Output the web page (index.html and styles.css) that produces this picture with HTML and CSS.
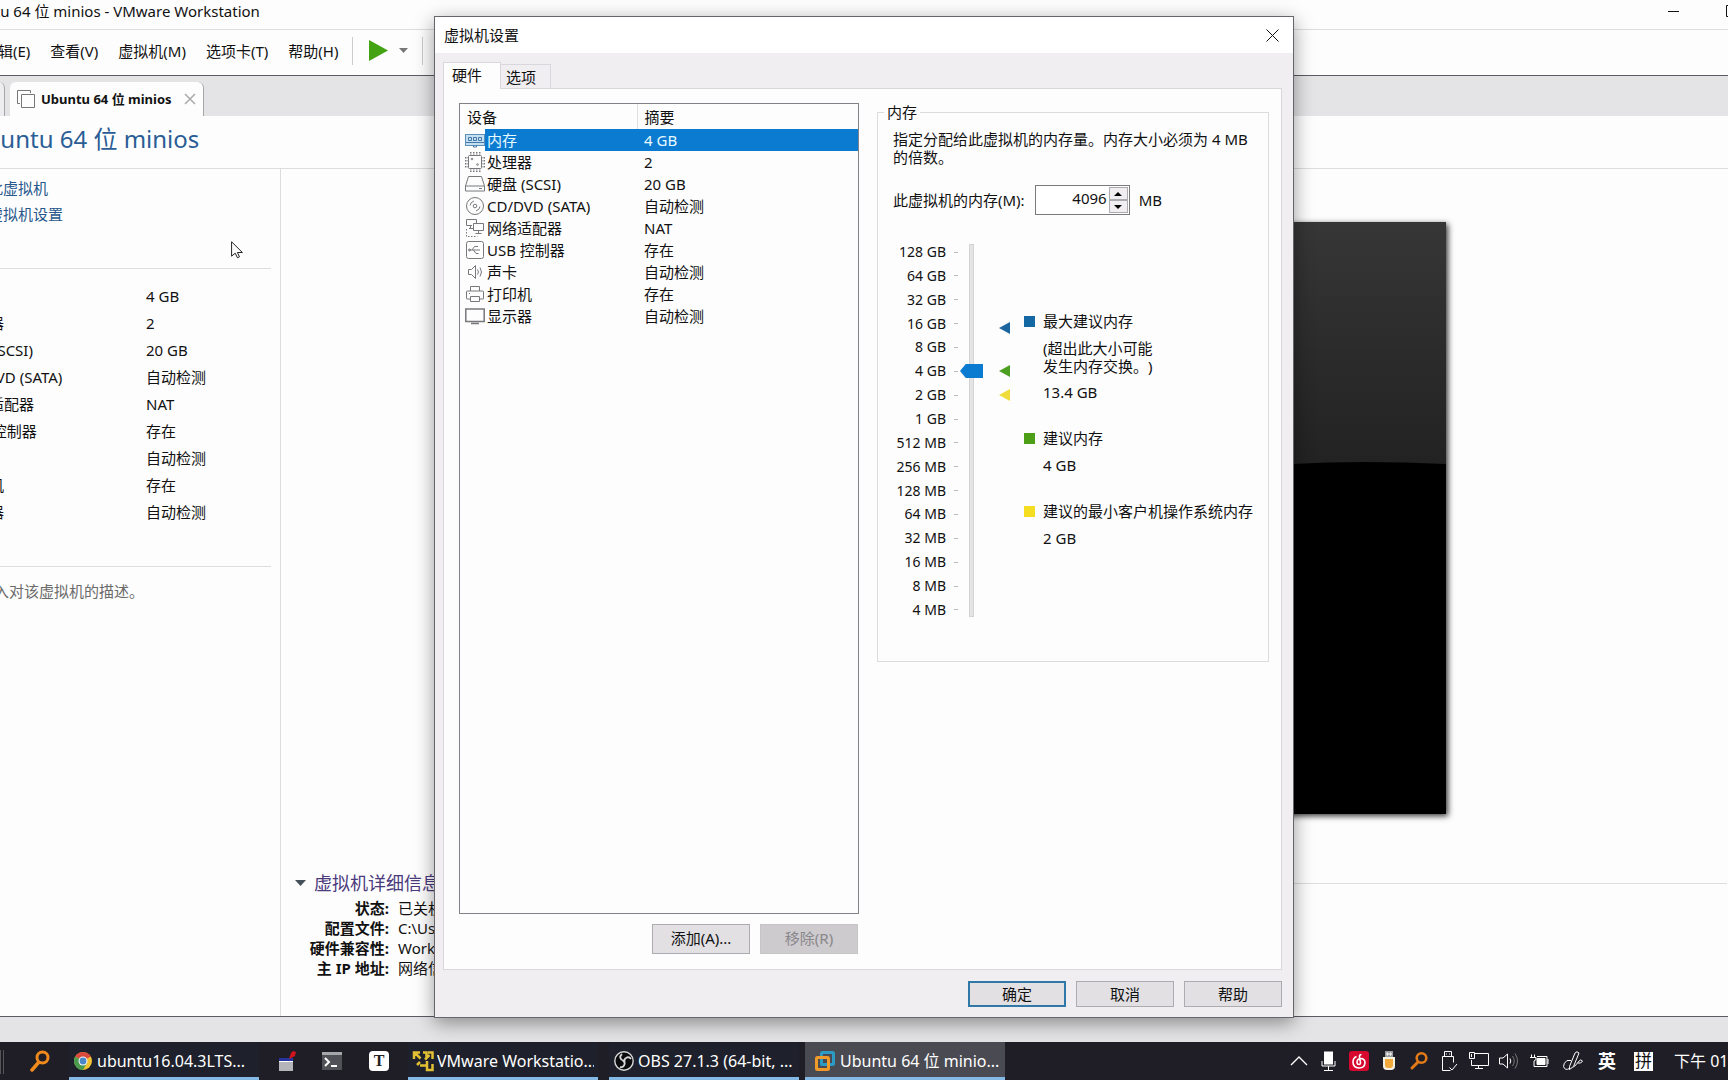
FILE: index.html
```html
<!DOCTYPE html>
<html lang="zh-CN">
<head>
<meta charset="utf-8">
<title>Ubuntu 64 位 minios - VMware Workstation</title>
<link rel="stylesheet" href="styles.css">
</head>
<body>
<div class="desktop">
  <main class="app">
    <header class="titlebar">
      <span class="titlebar-text">Ubuntu 64 位 minios - VMware Workstation</span>
      <button class="caption-btn" type="button" aria-label="最小化"><svg width="12" height="12" viewBox="0 0 12 12"><path d="M0 6.500h11" stroke="#111" fill="none"/></svg></button>
      <button class="caption-btn maximize" type="button" aria-label="最大化"><svg width="12" height="12" viewBox="0 0 12 12"><path d="M.5.500h11v11h-11z" stroke="#111" fill="none"/></svg></button>
    </header>
    <nav class="menubar">
      <div class="menu-items">
        <button type="button">编辑(E)</button>
        <button type="button">查看(V)</button>
        <button type="button">虚拟机(M)</button>
        <button type="button">选项卡(T)</button>
        <button type="button">帮助(H)</button>
      </div>
      <div class="power-group">
        <button type="button" aria-label="开启此虚拟机"><svg width="19" height="21" viewBox="0 0 19 21"><path d="M0 0 19 10.500 0 21z" fill="#43a312"/></svg></button>
        <button type="button" aria-label="电源选项"><svg width="9" height="5" viewBox="0 0 9 5"><path d="M0 0h9L4.500 5z" fill="#777"/></svg></button>
      </div>
    </nav>
    <div class="tabstrip">
      <div class="vm-tab vm-tab-rest"></div>
      <div class="vm-tab vm-tab-active">
        <svg width="18" height="18" viewBox="0 0 18 18" fill="none" stroke="#777"><path d="M3 13.500H.5V.500h13V3"/><path d="M4.500 4.500h13v13h-13z"/></svg>
        <span>Ubuntu 64 位 minios</span>
        <button type="button" aria-label="关闭选项卡"><svg width="12" height="12" viewBox="0 0 12 12"><path d="M1 1l10 10M11 1 1 11" stroke="#aaa" stroke-width="1.500"/></svg></button>
      </div>
    </div>
    <h1 class="vm-name">Ubuntu 64 位 minios</h1>
    <div class="workspace">
      <aside class="sidebar">
        <ul class="actions">
          <li><a href="#power">开启此虚拟机</a></li>
          <li><a href="#settings">编辑虚拟机设置</a></li>
        </ul>
        <dl class="devices">
          <dt>内存</dt><dd>4 GB</dd>
          <dt>处理器</dt><dd>2</dd>
          <dt>硬盘 (SCSI)</dt><dd>20 GB</dd>
          <dt>CD/DVD (SATA)</dt><dd>自动检测</dd>
          <dt>网络适配器</dt><dd>NAT</dd>
          <dt>USB 控制器</dt><dd>存在</dd>
          <dt>声卡</dt><dd>自动检测</dd>
          <dt>打印机</dt><dd>存在</dd>
          <dt>显示器</dt><dd>自动检测</dd>
        </dl>
        <p class="description">在此处键入对该虚拟机的描述。</p>
      </aside>
      <section class="content">
        <div class="console"><svg viewBox="0 0 884 592" preserveAspectRatio="none">
          <defs><linearGradient id="gloss" x1="0" y1="0" x2="0" y2="1"><stop offset="0" stop-color="#363636"/><stop offset="1" stop-color="#1c1b1c"/></linearGradient></defs>
          <path d="M0 0h884v592H0z" fill="#000"/><path d="M0 0h884v242Q800 238 730 242 600 249 442 280L0 330z" fill="url(#gloss)"/></svg></div>
        <div class="details">
          <div class="details-head">
            <svg width="11" height="6" viewBox="0 0 11 6"><path d="M0 0h11L5.500 6z" fill="#44505a"/></svg>
            <h2>虚拟机详细信息</h2><span class="rule"></span>
          </div>
          <dl>
            <dt>状态:</dt><dd>已关机</dd>
            <dt>配置文件:</dt><dd>C:\Users</dd>
            <dt>硬件兼容性:</dt><dd>Workstation</dd>
            <dt>主 IP 地址:</dt><dd>网络信息</dd>
          </dl>
        </div>
      </section>
    </div>
    <footer class="statusbar"></footer>
  </main>

  <svg class="cursor" width="12" height="18" viewBox="0 0 12 18"><path d="M.6.800v14.400l3.600-3 2.300 4.600 2-1-2.100-4.300h5z" fill="#fff" stroke="#222"/></svg>

  <section class="dialog" role="dialog" aria-labelledby="dialog-title">
    <header class="dialog-title">
      <h2 id="dialog-title">虚拟机设置</h2>
      <button type="button" aria-label="关闭"><svg width="13" height="13" viewBox="0 0 13 13"><path d="M.5.500l12 12M12.500.500l-12 12" stroke="#111"/></svg></button>
    </header>
    <div class="dialog-tabs" role="tablist">
      <button type="button" role="tab" aria-selected="true" class="active">硬件</button>
      <button type="button" role="tab" aria-selected="false">选项</button>
    </div>
    <div class="pane">
      <div class="hardware">
        <div class="device-list">
          <table>
            <thead><tr><th class="c-name">设备</th><th>摘要</th></tr></thead>
            <tbody>
              <tr class="selected"><td><div class="dev"><svg class="icon" viewBox="0 0 20 20"><rect x=".5" y="4.500" width="19" height="11" fill="#c4dff0" stroke="#5d8fb8"/><path d="M3.500 7.500h3v3h-3zM8.500 7.500h3v3h-3zM13.500 7.500h3v3h-3zM1 12.500h18M8.500 15.500V17h3v-1.500" fill="none" stroke="#4379a8"/></svg><span>内存</span></div></td><td>4 GB</td></tr>
              <tr><td><div class="dev"><svg class="icon" viewBox="0 0 20 20"><rect x="3.500" y="3.500" width="13" height="13" rx="1"/><path d="M5 .500h11M5 19.500h11M5 2h11M5 18h11M.5 5v11M19.500 5v11M2 5v11M18 5v11" stroke-dasharray="1.500 1.500"/><circle cx="7" cy="7" r=".8"/><circle cx="12.500" cy="12.500" r=".8"/></svg><span>处理器</span></div></td><td>2</td></tr>
              <tr><td><div class="dev"><svg class="icon" viewBox="0 0 20 20"><path d="M3.500 2.500h13l3 9.500v5H.5v-5zM.5 12h19M14 14.500h3"/></svg><span>硬盘 (SCSI)</span></div></td><td>20 GB</td></tr>
              <tr><td><div class="dev"><svg class="icon" viewBox="0 0 20 20"><circle cx="10" cy="10" r="8.500"/><circle cx="10" cy="10" r="1.800"/><path d="M5 9.500q.5-3.500 4-4.500M15 10.500q-.5 3.500-4 4.500"/></svg><span>CD/DVD (SATA)</span></div></td><td>自动检测</td></tr>
              <tr><td><div class="dev"><svg class="icon" viewBox="0 0 20 20"><path d="M7 7.500H1.500v-6h10V5M8.500 5.500h10v7h-10zM13.500 12.500v3M10.500 15.500h6M4 10.500h4M5.500 7.500v3"/><path d="M1.500 11v7.500h11" stroke-dasharray="1.500 1.500"/></svg><span>网络适配器</span></div></td><td>NAT</td></tr>
              <tr><td><div class="dev"><svg class="icon" viewBox="0 0 20 20"><rect x="1.500" y="1.500" width="17" height="17" rx="2"/><path d="M4 10h11M7 10l2.500-3.500H13M8.500 10l2.500 3.500h2.500"/><circle cx="4.500" cy="10" r="1"/></svg><span>USB 控制器</span></div></td><td>存在</td></tr>
              <tr><td><div class="dev"><svg class="icon" viewBox="0 0 20 20"><path d="M3.500 7.500h3l4-4v13l-4-4h-3zM12.500 7.500q2 2.500 0 5M15 5.500q3 4.500 0 9"/></svg><span>声卡</span></div></td><td>自动检测</td></tr>
              <tr><td><div class="dev"><svg class="icon" viewBox="0 0 20 20"><path d="M5.500 7V2.500h9V7M5.500 15H2q-.5 0-.5-.5V8q0-1 1-1h15q1 0 1 1v6.500q0 .5-.5.5h-3.500M5.500 12.500h9v5h-9zM4 9.500h1"/></svg><span>打印机</span></div></td><td>存在</td></tr>
              <tr><td><div class="dev"><svg class="icon" viewBox="0 0 20 20"><path d="M.8 3h18.400v12.500H.8zM6 17.500h8" stroke-width="1.500"/></svg><span>显示器</span></div></td><td>自动检测</td></tr>
            </tbody>
          </table>
        </div>
        <div class="list-buttons">
          <button class="btn" type="button">添加(A)...</button>
          <button class="btn" type="button" disabled>移除(R)</button>
        </div>
      </div>
      <fieldset class="memory">
        <legend>内存</legend>
        <p>指定分配给此虚拟机的内存量。内存大小必须为 4 MB 的倍数。</p>
        <div class="amount">
          <label for="mem">此虚拟机的内存(M):</label>
          <span class="spin">
            <input id="mem" type="text" value="4096">
            <span class="spin-buttons">
              <button type="button" aria-label="增加"><svg width="8" height="4" viewBox="0 0 8 4"><path d="M0 4h8L4 0z"/></svg></button>
              <button type="button" aria-label="减少"><svg width="8" height="4" viewBox="0 0 8 4"><path d="M0 0h8L4 4z"/></svg></button>
            </span>
          </span>
          <span>MB</span>
        </div>
        <div class="scale">
          <ul class="ticks">
            <li>128 GB</li><li>64 GB</li><li>32 GB</li><li>16 GB</li><li>8 GB</li><li>4 GB</li><li>2 GB</li><li>1 GB</li>
            <li>512 MB</li><li>256 MB</li><li>128 MB</li><li>64 MB</li><li>32 MB</li><li>16 MB</li><li>8 MB</li><li>4 MB</li>
          </ul>
          <input class="slider" type="range" min="0" max="15" value="10" aria-label="内存">
          <div class="markers">
            <svg class="blue" viewBox="0 0 11 12"><path d="M0 6 11 0v12z"/></svg>
            <svg class="green" viewBox="0 0 11 12"><path d="M0 6 11 0v12z"/></svg>
            <svg class="yellow" viewBox="0 0 11 12"><path d="M0 6 11 0v12z"/></svg>
          </div>
          <dl class="legend">
            <dt class="max">最大建议内存</dt>
            <dd class="note">(超出此大小可能<br>发生内存交换。)</dd>
            <dd>13.4 GB</dd>
            <dt class="rec">建议内存</dt>
            <dd>4 GB</dd>
            <dt class="min">建议的最小客户机操作系统内存</dt>
            <dd>2 GB</dd>
          </dl>
        </div>
      </fieldset>
    </div>
    <footer class="dialog-buttons">
      <button class="btn default" type="button">确定</button>
      <button class="btn" type="button">取消</button>
      <button class="btn" type="button">帮助</button>
    </footer>
  </section>

  <nav class="taskbar">
    <span class="edge"></span>
    <button class="pin find" type="button" aria-label="搜索"><svg width="20" height="22" viewBox="0 0 20 22" fill="none" stroke="#f08a1c"><circle cx="12.500" cy="7.500" r="5.500" stroke-width="3"/><path d="M8.500 12.500 2 20" stroke-width="3.500" stroke-linecap="round"/></svg></button>
    <button class="task" type="button"><svg width="18" height="20" viewBox="0 0 18 20"><circle cx="9" cy="10" r="9" fill="#f2c230"/><path d="M9 10 1.200 5.500A9 9 0 0 1 16.800 5.500z" fill="#d94a3c"/><path d="M9 10 1.200 5.500A9 9 0 0 0 9 19l4-7z" fill="#4b9b4f"/><circle cx="9" cy="10" r="4.500" fill="#f4f6f8"/><circle cx="9" cy="10" r="3.400" fill="#4b86c9"/></svg><span>ubuntu16.04.3LTS...</span></button>
    <button class="pin files" type="button" aria-label="文件"><svg width="18" height="22" viewBox="0 0 18 22"><path d="M1 8h14v13H1z" fill="#b4b5b8"/><path d="M1 8h14v3H1z" fill="#24349c"/><path d="M1 11h14v1H1z" fill="#fff"/><path d="M11 9l2-6 2-2 3 1-1 4-4 2z" fill="#d0131c"/></svg></button>
    <button class="pin term" type="button" aria-label="终端"><svg width="20" height="18" viewBox="0 0 20 18"><path d="M0 0h20v18H0z" fill="#505157"/><path d="M0 0h20v3H0z" fill="#a5a6aa"/><path d="M3 6l4 4-4 4M9 14h6" fill="none" stroke="#fff" stroke-width="2"/></svg></button>
    <button class="pin typora" type="button">T</button>
    <button class="task vmware" type="button"><svg width="22" height="22" viewBox="0 0 22 22" fill="none" stroke="#e3c033" stroke-width="2.500"><path d="M2 9V2.500h6M2 2l6.500 6.500M11 2.500h3.500V7M16 2.500h4.500V9M17.500 5 13 9.500M8 12l-3 3M8 15.500h7V11M15 15v5h5.500v-6"/></svg><span>VMware Workstatio...</span></button>
    <button class="task obs" type="button"><svg width="20" height="20" viewBox="0 0 20 20" fill="none" stroke="#d8d8d8"><circle cx="10" cy="10" r="9.200" fill="#0b0b0d" stroke-width="1.400"/><path d="M10 10C6 9 5 5.500 8 3M10 10c1-4 5-5 7-2M10 10c2 3.500-1 7-4 6" stroke-width="1.800"/><circle cx="10" cy="10" r="1" fill="#ddd"/></svg><span>OBS 27.1.3 (64-bit, ...</span></button>
    <button class="task current" type="button"><svg width="20" height="20" viewBox="0 0 20 20" fill="none" stroke-width="3"><rect x="6.500" y="1.500" width="12" height="12" rx="1" stroke="#2b9bc4"/><rect x="1.500" y="6.500" width="12" height="12" rx="1" stroke="#f09a2a"/><path d="M6.500 8v5.500H12" stroke="#2b9bc4" stroke-width="2"/></svg><span>Ubuntu 64 位 minio...</span></button>
    <div class="tray">
      <svg viewBox="0 0 20 20"><path d="M2 14l8-8 8 8" stroke-width="1.300"/></svg>
      <svg viewBox="0 0 20 20"><rect x="5.500" y="1" width="8" height="12" fill="#fff"/><path d="M3 10v5h13v-5M9.500 15v4M5 19.500h9"/></svg>
      <svg viewBox="0 0 20 20"><rect width="20" height="20" rx="3" fill="#d8092f" stroke="none"/><path d="M12.500 3.500q-2.500 0-2 3l1 5q0 2-1.500 2-2 0-2-2.500 0-3 3.500-3.500 4.500 0 4.500 4.500-.5 5-6 5-6-.5-6-6Q4 7 7.500 5.500" stroke-width="1.600"/></svg>
      <svg viewBox="0 0 20 20"><path d="M6 0h8v6H6z" fill="#9b9b9d" stroke="none"/><path d="M8 2h1v2H8zM11 2h1v2h-1z"/><path d="M4 6h12v9q0 4-4 4H8q-4 0-4-4z" fill="#f3f0e4" stroke="none"/><path d="M6 8h8v6q0 3-3 3H9q-3 0-3-3z" fill="#f2a83a" stroke="none"/></svg>
      <svg viewBox="0 0 20 20"><g stroke="#e27a18"><circle cx="12.500" cy="7" r="4.800" stroke-width="2.600"/><path d="M9 11 3 17" stroke-width="3" stroke-linecap="round"/></g></svg>
      <svg viewBox="0 0 20 20"><path d="M5.500 5.500v-5h7v5M3.500 19.500v-14h11v6M3.500 19.500h8M10.500 16.500l2.500 2.500 5-6M7.500 2.500v1M10.500 2.500v1"/></svg>
      <svg viewBox="0 0 20 20"><path d="M6 2.500h13.500v12h-17V9M.5 1.500h5v6h-5zM2.500 3v3M9.500 14.500v3M6 17.500h8"/></svg>
      <svg viewBox="0 0 20 20"><path d="M.5 7v6H4l4.500 4V3L4 7zM11 7.500q1.500 2.500 0 5"/><path d="M13.500 5q3.500 5 0 10M16 2.500q5 7.500 0 15" stroke="#777"/></svg>
      <svg viewBox="0 0 20 20"><path d="M2.500 3.500v3M5.500 3.500v3M1 6.500h6v2L5 10v5.500h13v-10H8"/><path d="M8 7.500h8v6H8z" fill="#fff"/><path d="M19 8v5"/></svg>
      <svg class="pen" viewBox="0 0 20 20"><path d="M6.500 15.500 12 2q2-2.500 4 0l-5.500 13.500-4 3zM8 9.500H4Q.5 12 .5 15.500q1.500 4.500 6 2M10.500 16q3-2 5-5.500 2.500-3 4-.5-1.500 3-4.500 2"/></svg>
      <span class="lang">英</span>
      <span class="ime">拼</span>
      <span class="clock">下午 01:30</span>
    </div>
  </nav>
</div>
</body>
</html>
```
FILE: styles.css
```css
* { box-sizing: border-box; margin: 0; padding: 0; }
html, body { height: 100%; }
body {
  overflow: hidden;
  font: 15px/20px "Noto Sans", "Noto Sans CJK SC", sans-serif;
  text-spacing-trim: space-all;
  color: #111;
  background: #fdfdfd;
}
button, input { font: inherit; color: inherit; }
button { border: 0; background: none; }
ul { list-style: none; }
svg { display: block; flex: none; }

.desktop { position: relative; height: 100vh; min-height: 800px; display: flex; flex-direction: column; overflow: hidden; }

/* The main window hangs over the left and right screen edges */
.app { flex: 1; min-height: 0; margin: 0 -10px 0 -80px; display: flex; flex-direction: column; background: #fdfdfd; }

.titlebar { display: flex; align-items: center; height: 30px; padding: 0 0 8px 36px; border-bottom: 1px solid #ddd; }
.titlebar-text { flex: 1; white-space: nowrap; }
.caption-btn { width: 58px; height: 20px; }
.maximize { width: 12px; }

.menubar { display: flex; align-items: center; height: 46px; padding-bottom: 4px; border-bottom: 1px solid #5c5b63; }
.menu-items { display: flex; gap: 20px; padding-left: 63px; white-space: nowrap; }
.power-group { display: flex; align-items: center; gap: 11px; height: 28px; margin-left: 14px; padding: 0 14px 0 16px; border: solid #ccc; border-width: 0 1px; }

.tabstrip { display: flex; align-items: flex-end; height: 40px; background: #e4e4e6; }
.vm-tab { height: 34px; border-right: 1px solid #a5a5a8; border-radius: 0 6px 0 0; }
.vm-tab-rest { width: 85px; background: #ededef; }
.vm-tab-active { display: flex; align-items: center; gap: 6px; margin-left: 5px; width: 194px; padding: 0 8px 0 7px; background: #fdfdfd; border-radius: 6px 6px 0 0; font-size: 13px; font-weight: 700; white-space: nowrap; }
.vm-tab-active button { margin-left: 6px; }

.vm-name { height: 53px; padding-left: 48px; border-bottom: 1px solid #ddd; color: #2a5d96; font-size: 24px; font-weight: 400; line-height: 46px; }

.workspace { flex: 1; min-height: 0; display: flex; }
.sidebar { width: 361px; padding-right: 9px; border-right: 1px solid #ddd; }
.actions { height: 100px; padding: 6px 0 0 38px; border-bottom: 1px solid #ddd; line-height: 26px; }
.actions a { color: #28588c; text-decoration: none; }
.devices { display: grid; grid-template-columns: 187px 1fr; height: 298px; align-content: start; padding: 14px 0 0 39px; border-bottom: 1px solid #ddd; line-height: 27px; }
.description { padding: 12px 0 0 14px; color: #6b6b6b; line-height: 24px; }

.content { flex: 1; display: flex; flex-direction: column; justify-content: space-between; padding: 53px 11px 38px 0; }
.console { align-self: center; width: 884px; height: 592px; box-shadow: 2px 2px 6px rgba(0, 0, 0, .8); }
.console svg { width: 100%; height: 100%; }
.details { padding-left: 14px; }
.details-head { display: flex; align-items: center; gap: 8px; height: 26px; }
.details-head h2 { color: #4b3a7c; font-size: 18px; font-weight: 400; }
.rule { flex: 1; height: 1px; background: #ddd; }
.details dl { display: grid; grid-template-columns: 94px 1fr; column-gap: 9px; padding-top: 2px; }
.details dt { text-align: right; font-weight: 700; white-space: nowrap; }

.statusbar { height: 26px; border-top: 1px solid #5c5b63; background: #e4e4e6; }

.cursor { position: absolute; left: 231px; top: 241px; }

/* Settings dialog */
.dialog { position: absolute; top: 16px; bottom: 62px; left: 0; right: 0; width: 860px; margin: 0 auto; display: flex; flex-direction: column; padding: 0 11px 10px 8px; border: 1px solid #66656c; background: #f0eef1; box-shadow: 0 5px 18px rgba(0, 0, 0, .4); }
.dialog-title { display: flex; align-items: center; justify-content: space-between; height: 36px; margin: 0 -11px 0 -8px; padding: 0 14px 0 9px; background: #fff; }
.dialog-title h2 { font-size: 15px; font-weight: 400; }
.dialog-tabs { display: flex; align-items: flex-end; height: 35px; }
.dialog-tabs button { width: 50px; height: 24px; padding: 0 5px; border: 1px solid #d9d7dc; border-width: 1px 1px 0 0; text-align: left; }
.dialog-tabs .active { position: relative; width: 58px; height: 27px; margin-bottom: -1px; padding: 0 8px 3px; border-width: 1px 1px 0; background: #fdfdfd; }
.pane { flex: 1; min-height: 0; display: flex; align-items: stretch; gap: 18px; padding: 14px 12px 15px 15px; border: 1px solid #d9d7dc; background: #fdfdfd; }
.hardware { flex: none; width: 400px; display: flex; flex-direction: column; gap: 10px; }
.device-list { flex: 1; border: 1px solid #828187; overflow: hidden; }
table { width: 100%; border-collapse: collapse; table-layout: fixed; }
th { height: 25px; padding-left: 7px; font-weight: 400; text-align: left; }
.c-name { width: 177px; border-right: 1px solid #e0e0e0; }
td { height: 22px; padding-left: 7px; }
td:first-child { padding-left: 5px; }
.dev { display: flex; align-items: center; height: 22px; }
.dev span { flex: 1; padding-left: 2px; line-height: 22px; white-space: nowrap; }
.icon { width: 20px; height: 20px; fill: none; stroke: #77787c; }
.selected { color: #e8fbff; }
.selected td:last-child, .selected .dev span { background: #0b7ad1; }
.list-buttons { display: flex; justify-content: flex-end; gap: 10px; padding-right: 1px; }
.btn { width: 98px; height: 26px; padding-bottom: 1px; border: 1px solid #adabb0; background: #e2e0e3; }
.list-buttons .btn { height: 30px; padding-bottom: 3px; }
.btn:disabled { border-color: #c6c4c7; background: #cdcbce; color: #89878b; }
.btn.default { border: 2px solid #2f78a8; }
.dialog-buttons { display: flex; justify-content: flex-end; gap: 10px; padding-top: 11px; }

.memory { flex: 1; min-width: 0; align-self: flex-start; height: 559px; padding: 9px 12px 0 15px; border: 1px solid #dcdcdc; }
.memory legend { height: 18px; margin-left: -9px; padding: 0 3px; line-height: 18px; }
.memory p { height: 55px; line-height: 18px; }
.amount { display: flex; align-items: center; gap: 9px; height: 30px; }
.spin { display: flex; width: 95px; height: 30px; margin-left: 1px; padding: 1px; border: 1px solid #7a797e; background: #fff; }
.spin input { flex: 1; min-width: 0; padding: 0 2px 5px 0; border: 0; outline: 0; background: none; text-align: right; }
.spin-buttons { display: flex; flex-direction: column; width: 19px; }
.spin-buttons button { flex: 1; display: flex; align-items: center; justify-content: center; border: 1px solid #adabb0; background: #f0eef1; }
.scale { display: flex; align-items: flex-start; padding-top: 26px; }
.ticks { width: 65px; height: 380px; display: flex; flex-direction: column; justify-content: space-between; font-size: 14px; line-height: 22px; text-align: right; }
.ticks li { display: flex; align-items: center; justify-content: flex-end; gap: 8px; white-space: nowrap; }
.ticks li::after { content: ""; width: 4px; height: 1px; background: #bbb; }
.slider { appearance: none; writing-mode: vertical-lr; direction: rtl; width: 23px; height: 373px; margin: 3px 0 0 2px; background: none; }
.slider::-webkit-slider-runnable-track { width: 5px; border: 1px solid #d3d3d3; background: #e4e4e4; }
.slider::-webkit-slider-thumb { appearance: none; width: 23px; height: 14px; margin-left: -10px; background: #0b7ad1; clip-path: polygon(0 50%, 25% 0, 100% 0, 100% 100%, 25% 100%); }
.markers { width: 11px; margin: 81px 14px 0 16px; }
.markers svg { width: 11px; height: 12px; }
.blue { fill: #1b669f; }
.green { margin-top: 31px; fill: #4d9f22; }
.yellow { margin-top: 12px; fill: #efdc3a; }
.legend { padding-top: 70px; white-space: nowrap; }
.legend dt { display: flex; align-items: center; gap: 8px; }
.legend dt::before { content: ""; width: 11px; height: 11px; }
.legend dd { margin: 7px 0 0 19px; }
.legend .note { margin-top: 8px; line-height: 18px; }
.legend dd + dt { margin-top: 26px; }
.legend .max::before { background: #1468a4; }
.legend .rec::before { background: #4d9f18; }
.legend .min::before { background: #f5de22; }

/* Taskbar */
.taskbar { display: flex; height: 38px; background: #1f1e26; color: #fff; font-size: 16px; white-space: nowrap; }
.edge { width: 4px; height: 24px; margin-top: 8px; border: solid #555; border-width: 0 1px; }
.pin { display: flex; align-items: center; justify-content: center; }
.find { width: 65px; padding-left: 6px; }
.task { display: flex; align-items: center; gap: 5px; width: 190px; padding: 2px 5px 0; border-bottom: 3px solid #83b9e4; background: #1e212b; }
.task span { flex: 1; overflow: hidden; text-align: left; }
.files { width: 56px; }
.term { width: 34px; }
.typora { width: 20px; height: 20px; margin: 9px 19px 0 20px; border-radius: 4px; background: #fff; color: #222; font: 700 16px/20px "Liberation Serif", serif; }
.vmware { gap: 3px; padding: 2px 4px 0; }
.obs { margin-left: 11px; gap: 4px; }
.current { width: 200px; margin-left: 6px; padding-left: 10px; background: #4a4a53; }
.tray { display: flex; align-items: center; gap: 10px; margin-left: auto; }
.tray svg { width: 20px; height: 20px; fill: none; stroke: #fff; }
.tray .pen { margin: 0 2px 0 4px; }
.lang { width: 20px; margin-left: 3px; font-size: 18px; font-weight: 700; }
.ime { width: 19px; height: 19px; margin: 0 11px 0 6px; background: #fff; color: #111; font-size: 17px; line-height: 18px; text-align: center; }
.clock { width: 54px; overflow: hidden; font-size: 16px; }
```
